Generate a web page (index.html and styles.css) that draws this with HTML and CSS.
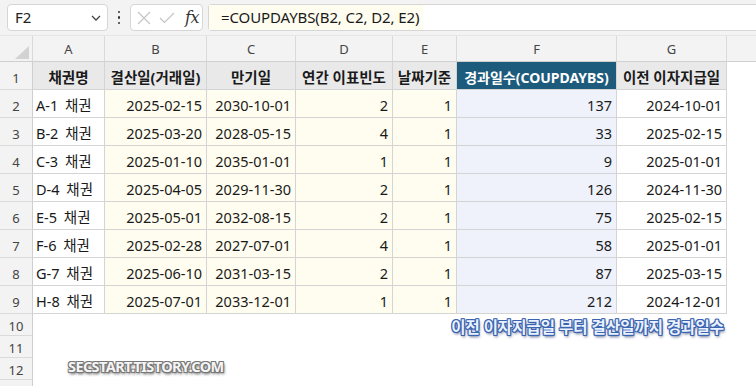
FILE: index.html
```html
<!DOCTYPE html>
<html lang="ko">
<head>
<meta charset="utf-8">
<link rel="stylesheet" href="styles.css">
</head>
<body>
<div class="app">
  <div class="fbar">
    <div class="namebox"><span class="nb-text">F2</span>
      <svg class="chev" width="10" height="6" viewBox="0 0 10 6"><path d="M1 1 L5 5 L9 1" fill="none" stroke="#444" stroke-width="1.3"/></svg>
    </div>
    <div class="dots"><span></span><span></span><span></span></div>
    <div class="fxbox">
      <svg width="14" height="14" viewBox="0 0 14 14"><path d="M1 1 L13 13 M13 1 L1 13" stroke="#c4c4c4" stroke-width="1.2" fill="none"/></svg>
      <svg width="16" height="12" viewBox="0 0 16 12"><path d="M1 6 L5.5 10.5 L15 1" stroke="#c4c4c4" stroke-width="1.2" fill="none"/></svg>
      <span class="fx">fx</span>
    </div>
    <div class="finput"><span class="ftext">=COUPDAYBS(B2, C2, D2, E2)</span></div>
  </div>
  <div class="sheet">
    <div class="corner"><span class="tri"></span></div>
    <div class="ch">A</div><div class="ch">B</div><div class="ch">C</div><div class="ch">D</div><div class="ch">E</div><div class="ch">F</div><div class="ch">G</div><div class="ch last"></div>

    <div class="rh">1</div>
    <div class="c hd">채권명</div><div class="c hd">결산일(거래일)</div><div class="c hd">만기일</div><div class="c hd">연간 이표빈도</div><div class="c hd">날짜기준</div><div class="c hd sel">경과일수(COUPDAYBS)</div><div class="c hd">이전 이자지급일</div><div class="e"></div>

    <div class="rh">2</div>
    <div class="c w nm">A-1 채권</div><div class="c y n">2025-02-15</div><div class="c y n">2030-10-01</div><div class="c y n">2</div><div class="c y n">1</div><div class="c b n">137</div><div class="c w n">2024-10-01</div><div class="e"></div>

    <div class="rh">3</div>
    <div class="c w nm">B-2 채권</div><div class="c y n">2025-03-20</div><div class="c y n">2028-05-15</div><div class="c y n">4</div><div class="c y n">1</div><div class="c b n">33</div><div class="c w n">2025-02-15</div><div class="e"></div>

    <div class="rh">4</div>
    <div class="c w nm">C-3 채권</div><div class="c y n">2025-01-10</div><div class="c y n">2035-01-01</div><div class="c y n">1</div><div class="c y n">1</div><div class="c b n">9</div><div class="c w n">2025-01-01</div><div class="e"></div>

    <div class="rh">5</div>
    <div class="c w nm">D-4 채권</div><div class="c y n">2025-04-05</div><div class="c y n">2029-11-30</div><div class="c y n">2</div><div class="c y n">1</div><div class="c b n">126</div><div class="c w n">2024-11-30</div><div class="e"></div>

    <div class="rh">6</div>
    <div class="c w nm">E-5 채권</div><div class="c y n">2025-05-01</div><div class="c y n">2032-08-15</div><div class="c y n">2</div><div class="c y n">1</div><div class="c b n">75</div><div class="c w n">2025-02-15</div><div class="e"></div>

    <div class="rh">7</div>
    <div class="c w nm">F-6 채권</div><div class="c y n">2025-02-28</div><div class="c y n">2027-07-01</div><div class="c y n">4</div><div class="c y n">1</div><div class="c b n">58</div><div class="c w n">2025-01-01</div><div class="e"></div>

    <div class="rh">8</div>
    <div class="c w nm">G-7 채권</div><div class="c y n">2025-06-10</div><div class="c y n">2031-03-15</div><div class="c y n">2</div><div class="c y n">1</div><div class="c b n">87</div><div class="c w n">2025-03-15</div><div class="e"></div>

    <div class="rh">9</div>
    <div class="c w nm">H-8 채권</div><div class="c y n">2025-07-01</div><div class="c y n">2033-12-01</div><div class="c y n">1</div><div class="c y n">1</div><div class="c b n">212</div><div class="c w n">2024-12-01</div><div class="e"></div>

    <div class="rh s">10</div>
    <div class="note">이전 이자지급일 부터 결산일까지 경과일수</div><div class="e"></div>

    <div class="rh s">11</div>
    <div class="blank"></div><div class="e"></div>

    <div class="rh s">12</div>
    <div class="site">SECSTART.TISTORY.COM</div><div class="e"></div>

    <div class="rh s"></div>
    <div class="blank"></div><div class="e"></div>
  </div>
</div>
</body>
</html>
```

FILE: styles.css
```css
* { box-sizing: border-box; }
html, body { margin: 0; padding: 0; background: #ffffff; }
body { font-family: "Noto Sans", "Noto Sans CJK KR", sans-serif; color: #1a1a1a; overflow: hidden; }
.app { width: 756px; height: 386px; overflow: hidden; }

.fbar {
  height: 36px;
  background: #f3f3f3;
  display: flex;
  align-items: center;
  padding: 0 0 0 7px;
  border-bottom: 1px solid #e6e6e6;
}
.namebox {
  width: 101px; height: 27px;
  background: #fff;
  border: 1px solid #d6d6d6;
  border-radius: 4px;
  display: flex; align-items: center; justify-content: space-between;
  padding: 0 6px 0 7px;
  font-size: 15px;
  color: #222;
}
.nb-text { line-height: 1; }
.dots {
  width: 22px; height: 27px;
  display: flex; flex-direction: column; align-items: center; justify-content: center; gap: 3px;
}
.dots span { width: 2.5px; height: 2.5px; background: #333; border-radius: 50%; display: block; }
.fxbox {
  width: 73px; height: 27px;
  background: #fff;
  border: 1px solid #d6d6d6;
  border-radius: 4px;
  display: flex; align-items: center;
  padding: 0 0 0 6px;
  gap: 8px;
}
.fx { font-family: "DejaVu Serif", "Liberation Serif", serif; font-style: italic; font-size: 16px; color: #333; margin-left: 2px; letter-spacing: -0.5px; }
.finput {
  flex: 1;
  margin-left: 5px;
  height: 27px;
  background: #fff;
  border: 1px solid #d6d6d6;
  border-right: none;
  border-radius: 4px 0 0 4px;
  display: flex; align-items: center;
}
.ftext {
  font-size: 15px;
  color: #1a1a1a;
  background: #fffdf0;
  height: 25px; line-height: 25px;
  padding: 0 4px 0 12px;
  letter-spacing: -0.1px;
}

.sheet {
  display: grid;
  grid-template-columns: 33px 72px 102px 89px 97px 64px 160px 110px 1fr;
  grid-template-rows: 26px repeat(9, 28px) repeat(4, 22px);
}
.corner { background: #f3f3f3; border-right: 1px solid #d9d9d9; border-bottom: 1px solid #cfcfcf; position: relative; }
.tri {
  position: absolute; right: 3px; bottom: 2px;
  width: 0; height: 0;
  border-left: 14px solid transparent;
  border-bottom: 13px solid #d2d2d2;
}
.ch {
  background: #f3f3f3;
  border-right: 1px solid #dadada;
  border-bottom: 1px solid #cfcfcf;
  font-size: 13px; color: #444;
  display: flex; align-items: center; justify-content: center;
  padding-top: 1px;
}
.ch.last { border-right: none; }
.rh {
  background: #f3f3f3;
  border-right: 1px solid #cfcfcf;
  border-bottom: 1px solid #dadada;
  font-size: 13px; color: #444;
  display: flex; align-items: center; justify-content: center;
  padding-top: 5px;
}
.rh.s { padding-top: 2px; }
.c {
  border-right: 1px solid #d4d4d4;
  border-bottom: 1px solid #d4d4d4;
  font-size: 14.5px;
  display: flex; align-items: center;
  padding: 2px 4px 0 3px;
  white-space: nowrap;
}
.c.nm { word-spacing: 3px; }
.c.n { justify-content: flex-end; }
.c.hd { background: #e9e9e9; font-weight: 700; justify-content: center; font-size: 14.5px; padding: 2px 0 0 0; }
.c.hd.sel { background: #1d5b7c; color: #ffffff; font-size: 14px; }
.c.w { background: #ffffff; }
.c.y { background: #fffdef; }
.c.b { background: #eff2fb; }
.e { background: #ffffff; }
.blank { grid-column: 2 / 9; }
.note {
  grid-column: 2 / 9;
  text-align: right;
  padding-right: 3px;
  font-size: 15.5px;
  font-weight: 700;
  color: #eaf1ff;
  line-height: 26px;
  letter-spacing: 0;
  white-space: nowrap;
  text-shadow:
    -1px -1px 0 #3a64b0, 1px -1px 0 #3a64b0, -1px 1px 0 #3a64b0, 1px 1px 0 #3a64b0,
    0 -1px 0 #3a64b0, 0 1px 0 #3a64b0, -1px 0 0 #3a64b0, 1px 0 0 #3a64b0,
    1px 2px 3px rgba(20,40,90,0.8);
}
.site {
  grid-column: 2 / 9;
  padding-left: 35px;
  font-size: 14.5px;
  font-weight: 700;
  color: #f4f4f4;
  line-height: 16px;
  letter-spacing: -0.6px;
  white-space: nowrap;
  text-shadow:
    -1px -1px 0 #777, 1px -1px 0 #777, -1px 1px 0 #777, 1px 1px 0 #777,
    1px 2px 3px rgba(0,0,0,0.7);
}
```
